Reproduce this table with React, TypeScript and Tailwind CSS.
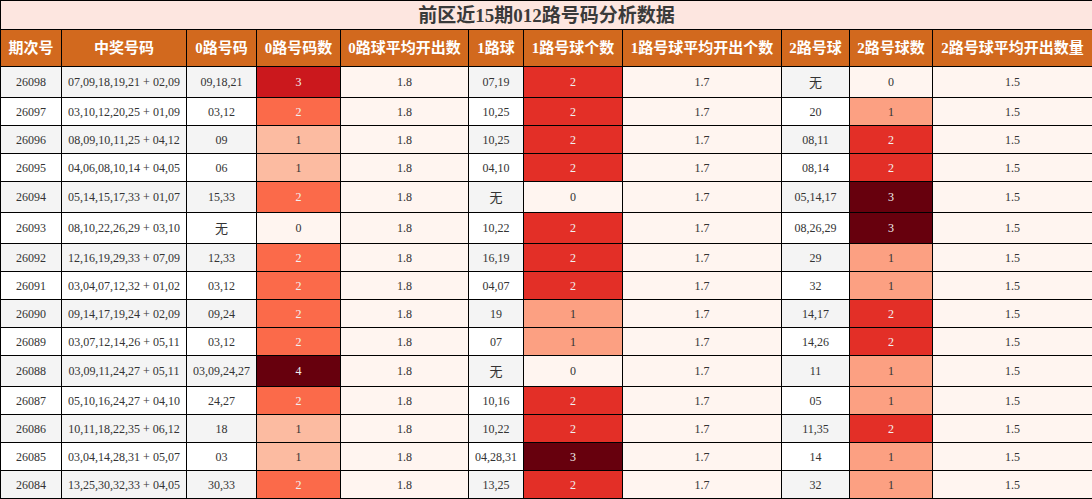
import React from "react";

type Row = [string, string, string, number, string, number, string, number];

const rows: Row[] = [
  ["26098", "07,09,18,19,21 + 02,09", "09,18,21", 3, "07,19", 2, "无", 0],
  ["26097", "03,10,12,20,25 + 01,09", "03,12", 2, "10,25", 2, "20", 1],
  ["26096", "08,09,10,11,25 + 04,12", "09", 1, "10,25", 2, "08,11", 2],
  ["26095", "04,06,08,10,14 + 04,05", "06", 1, "04,10", 2, "08,14", 2],
  ["26094", "05,14,15,17,33 + 01,07", "15,33", 2, "无", 0, "05,14,17", 3],
  ["26093", "08,10,22,26,29 + 03,10", "无", 0, "10,22", 2, "08,26,29", 3],
  ["26092", "12,16,19,29,33 + 07,09", "12,33", 2, "16,19", 2, "29", 1],
  ["26091", "03,04,07,12,32 + 01,02", "03,12", 2, "04,07", 2, "32", 1],
  ["26090", "09,14,17,19,24 + 02,09", "09,24", 2, "19", 1, "14,17", 2],
  ["26089", "03,07,12,14,26 + 05,11", "03,12", 2, "07", 1, "14,26", 2],
  ["26088", "03,09,11,24,27 + 05,11", "03,09,24,27", 4, "无", 0, "11", 1],
  ["26087", "05,10,16,24,27 + 04,10", "24,27", 2, "10,16", 2, "05", 1],
  ["26086", "10,11,18,22,35 + 06,12", "18", 1, "10,22", 2, "11,35", 2],
  ["26085", "03,04,14,28,31 + 05,07", "03", 1, "04,28,31", 3, "14", 1],
  ["26084", "13,25,30,32,33 + 04,05", "30,33", 2, "13,25", 2, "32", 1],
];

const heads = [
  "期次号",
  "中奖号码",
  "0路号码",
  "0路号码数",
  "0路球平均开出数",
  "1路球",
  "1路号球个数",
  "1路号球平均开出个数",
  "2路号球",
  "2路号球数",
  "2路号球平均开出数量",
];

const widths = [61, 125, 70, 84, 128, 55, 99, 159, 68, 83, 160];

// Reds colormap cells
const col0: Record<number, string> = {
  0: "bg-[#fff5f0] text-[#333333]",
  1: "bg-[#fcbba1] text-[#333333]",
  2: "bg-[#fb6a4a] text-[#f1f1f1]",
  3: "bg-[#cb181d] text-[#f1f1f1]",
  4: "bg-[#67000d] text-[#f1f1f1]",
};
const col12: Record<number, string> = {
  0: "bg-[#fff5f0] text-[#333333]",
  1: "bg-[#fca082] text-[#333333]",
  2: "bg-[#e32f27] text-[#f1f1f1]",
  3: "bg-[#67000d] text-[#f1f1f1]",
};

const base = "border border-black text-center align-middle p-0";

export default function App() {
  return (
    <div className="w-[1092px] bg-white" style={{}}>
      <table
        className="w-[1092px] table-fixed border-collapse text-[12px] leading-none text-[#333333]"
        style={{ fontFamily: '"Liberation Serif", "Noto Sans CJK SC", serif' }}
      >
        <colgroup>
          {widths.map((w, i) => (
            <col key={i} style={{ width: w }} />
          ))}
        </colgroup>
        <thead>
          <tr>
            <th
              colSpan={11}
              className="h-[29px] border border-black bg-[#fde6e0] p-0 text-center text-[19px] font-bold text-[#3a3a3a]"
            >
              前区近15期012路号码分析数据
            </th>
          </tr>
          <tr>
            {heads.map((h) => (
              <th
                key={h}
                className="h-[37px] border border-black bg-[#d2691e] p-0 text-center text-[15px] font-bold whitespace-nowrap text-white"
              >
                {h}
              </th>
            ))}
          </tr>
        </thead>
        <tbody>
          {rows.map((r, i) => {
            const tall = r.includes("无");
            const zebra = i % 2 === 0 ? "bg-[#f4f4f4]" : "bg-white";
            const h = tall ? "h-[31px]" : "h-[28px]";
            return (
              <tr key={r[0]} className={h}>
                <td className={`${base} ${zebra}`}>{r[0]}</td>
                <td className={`${base} ${zebra} whitespace-nowrap`}>{r[1]}</td>
                <td className={`${base} ${zebra} whitespace-nowrap ${r[2] === "无" ? "text-[13px]" : ""}`}>{r[2]}</td>
                <td className={`${base} ${col0[r[3]]}`}>{r[3]}</td>
                <td className={`${base} bg-[#fff5f0]`}>1.8</td>
                <td className={`${base} ${zebra} whitespace-nowrap ${r[4] === "无" ? "text-[13px]" : ""}`}>{r[4]}</td>
                <td className={`${base} ${col12[r[5]]}`}>{r[5]}</td>
                <td className={`${base} bg-[#fff5f0]`}>1.7</td>
                <td className={`${base} ${zebra} whitespace-nowrap ${r[6] === "无" ? "text-[13px]" : ""}`}>{r[6]}</td>
                <td className={`${base} ${col12[r[7]]}`}>{r[7]}</td>
                <td className={`${base} bg-[#fff5f0]`}>1.5</td>
              </tr>
            );
          })}
        </tbody>
      </table>
    </div>
  );
}
